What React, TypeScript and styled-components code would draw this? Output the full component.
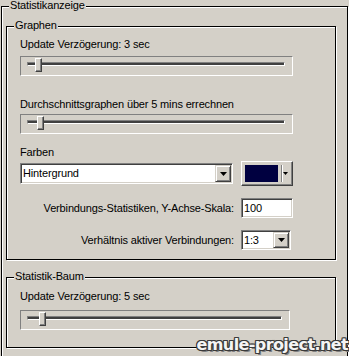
import React from 'react';
import styled, { createGlobalStyle } from 'styled-components';

const GlobalStyle = createGlobalStyle`
  html, body {
    margin: 0;
    padding: 0;
    background: #d4d0c8;
  }
  body {
    font-family: 'Liberation Sans', Arial, sans-serif;
    font-size: 11px;
    letter-spacing: -0.15px;
    color: #000;
  }
`;

type SliderProps = { width: number; offset: number };

const Slider = ({ width, offset }: SliderProps) => (
  <Track $w={width}>
    <Channel />
    <Thumb $left={offset} />
  </Track>
);

const DownArrow = ({ w = 7 }: { w?: number }) => (
  <svg width={w} height={Math.ceil(w / 2)} viewBox={`0 0 ${w} ${Math.ceil(w / 2)}`}>
    <polygon points={`0,0 ${w},0 ${w / 2},${Math.ceil(w / 2)}`} fill='#000' />
  </svg>
);

export default function App() {
  return (
    <Window>
      <GlobalStyle />
      <OuterGroup>
        <Caption>Statistikanzeige</Caption>

        <Group $pad='11px 42px 9px 13px'>
          <Caption>Graphen</Caption>
          <Label>Update Verzögerung: 3 sec</Label>
          <Spaced $top={5}>
            <Slider width={273} offset={14} />
          </Spaced>
          <Spaced $top={22}>
            <Label>Durchschnittsgraphen über 5 mins errechnen</Label>
          </Spaced>
          <Spaced $top={3}>
            <Slider width={273} offset={16} />
          </Spaced>
          <Spaced $top={12}>
            <Label>Farben</Label>
          </Spaced>
          <ColorRow>
            <Field $w={213} $h={21}>
              <FieldText>Hintergrund</FieldText>
              <DropButton $w={16} $h={17}>
                <DownArrow />
              </DropButton>
            </Field>
            <ColorButton>
              <Swatch />
              <Separator />
              <SmallArrow>
                <DownArrow w={5} />
              </SmallArrow>
            </ColorButton>
          </ColorRow>
          <FieldRow $top={12}>
            <FieldLabel>Verbindungs-Statistiken, Y-Achse-Skala:</FieldLabel>
            <Field $w={52} $h={20}>
              <FieldText>100</FieldText>
            </Field>
          </FieldRow>
          <FieldRow $top={12}>
            <FieldLabel>Verhältnis aktiver Verbindungen:</FieldLabel>
            <Field $w={50} $h={20}>
              <FieldText>1:3</FieldText>
              <DropButton $w={16} $h={16}>
                <DownArrow />
              </DropButton>
            </Field>
          </FieldRow>
        </Group>

        <Spaced $top={17}>
          <Group $pad='12px 42px 17px 13px'>
            <Caption>Statistik-Baum</Caption>
            <Label>Update Verzögerung: 5 sec</Label>
            <Spaced $top={7}>
              <Slider width={270} offset={18} />
            </Spaced>
          </Group>
        </Spaced>
      </OuterGroup>
      <Watermark>emule-project.net</Watermark>
    </Window>
  );
}

const Window = styled.div`
  position: relative;
  width: 349px;
  height: 356px;
  overflow: hidden;
  box-sizing: border-box;
  padding: 6px 0 0 1px;
  background: #d4d0c8;
`;

const Group = styled.div<{ $pad: string }>`
  position: relative;
  box-sizing: border-box;
  display: flex;
  flex-direction: column;
  align-items: flex-start;
  border: 1px solid #000;
  box-shadow: 1px 1px 0 #fff, inset 1px 1px 0 #fff;
  padding: ${(p) => p.$pad};
`;

const OuterGroup = styled(Group).attrs({ $pad: '19px 11px 12px 4px' })`
  width: 347px;
  align-items: stretch;
`;

const Caption = styled.span`
  position: absolute;
  top: -8px;
  left: 7px;
  padding: 0 1px;
  line-height: 13px;
  background: #d4d0c8;
  white-space: nowrap;
`;

const Label = styled.div`
  line-height: 13px;
  height: 13px;
  white-space: nowrap;
`;

const Spaced = styled.div<{ $top: number }>`
  margin-top: ${(p) => p.$top}px;
  align-self: stretch;
`;

const Track = styled.div<{ $w: number }>`
  position: relative;
  box-sizing: border-box;
  width: ${(p) => p.$w}px;
  height: 20px;
  padding: 5px 7px 0 6px;
  border: 1px solid;
  border-color: #808080 #fff #fff #808080;
`;

const Channel = styled.div`
  box-sizing: border-box;
  height: 4px;
  border: 1px solid;
  border-color: #808080 #fff #fff #808080;
  background: #404040;
`;

const Thumb = styled.div<{ $left: number }>`
  position: absolute;
  top: 1px;
  left: ${(p) => p.$left}px;
  box-sizing: border-box;
  width: 7px;
  height: 14px;
  background: #d4d0c8;
  border: 1px solid;
  border-color: #fff #404040 #404040 #fff;
  box-shadow: inset -1px -1px 0 #808080;
`;

const ColorRow = styled.div`
  align-self: stretch;
  margin-top: 2px;
  height: 25px;
  display: flex;
  align-items: center;
  justify-content: space-between;
`;

const Field = styled.div<{ $w: number; $h: number }>`
  box-sizing: border-box;
  width: ${(p) => p.$w}px;
  height: ${(p) => p.$h}px;
  display: flex;
  align-items: center;
  background: #fff;
  border: 1px solid;
  border-color: #808080 #fff #fff #808080;
  box-shadow: inset 1px 1px 0 #404040, inset -1px -1px 0 #d4d0c8;
`;

const FieldText = styled.span`
  flex: 1;
  padding-left: 2px;
  line-height: 13px;
  white-space: nowrap;
`;

const DropButton = styled.div<{ $w: number; $h: number }>`
  box-sizing: border-box;
  width: ${(p) => p.$w}px;
  height: ${(p) => p.$h}px;
  margin-right: 1px;
  display: flex;
  align-items: center;
  justify-content: center;
  background: #d4d0c8;
  border: 1px solid;
  border-color: #d4d0c8 #404040 #404040 #d4d0c8;
  box-shadow: inset 1px 1px 0 #fff, inset -1px -1px 0 #808080;
`;

const ColorButton = styled.div`
  box-sizing: border-box;
  width: 52px;
  height: 25px;
  padding: 3px;
  display: flex;
  align-items: center;
  background: #d4d0c8;
  border: 1px solid;
  border-color: #fff #404040 #404040 #fff;
  box-shadow: inset -1px -1px 0 #808080;
`;

const Swatch = styled.div`
  width: 33px;
  height: 17px;
  background: #000040;
`;

const Separator = styled.div`
  width: 0;
  height: 17px;
  margin-left: 3px;
  border-left: 1px solid #808080;
  border-right: 1px solid #fff;
`;

const SmallArrow = styled.div`
  flex: 1;
  display: flex;
  justify-content: center;
  padding-right: 1px;
`;

const FieldRow = styled.div<{ $top: number }>`
  align-self: stretch;
  margin-top: ${(p) => p.$top}px;
  display: grid;
  grid-template-columns: 1fr 52px;
  column-gap: 7px;
  align-items: center;
`;

const FieldLabel = styled.span`
  text-align: right;
  line-height: 13px;
  white-space: nowrap;
`;

const Watermark = styled.div`
  position: absolute;
  right: 1px;
  bottom: 2px;
  font-family: 'DejaVu Sans', sans-serif;
  font-weight: bold;
  font-size: 16px;
  line-height: 18px;
  letter-spacing: -0.6px;
  color: #f4f4f4;
  text-shadow: -1px 0 #3a3a3a, 1px 0 #3a3a3a, 0 -1px #3a3a3a, 0 1px #3a3a3a,
    -1px -1px #3a3a3a, 1px 1px #3a3a3a, 1px -1px #3a3a3a, -1px 1px #3a3a3a,
    2px 2px #808080;
`;
